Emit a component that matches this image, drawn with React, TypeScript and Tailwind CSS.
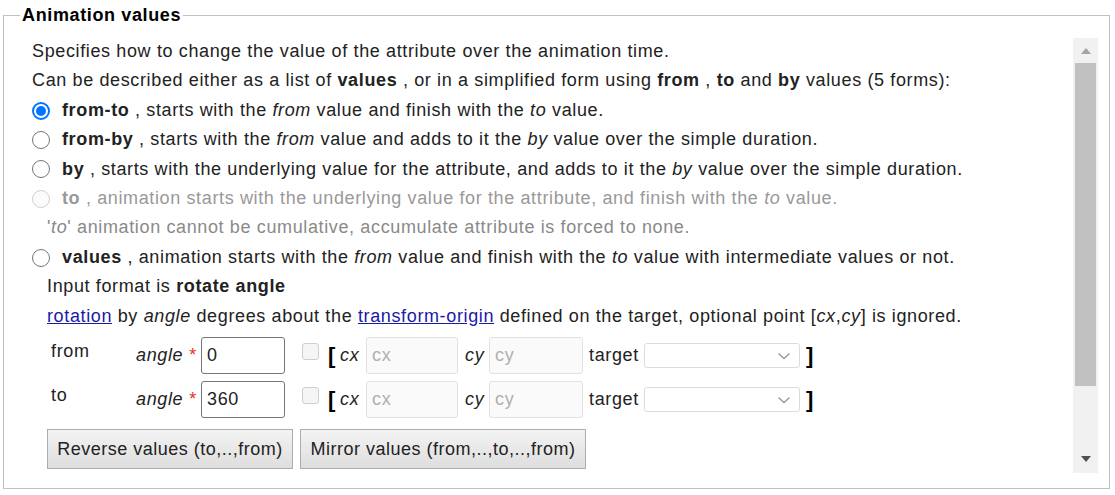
import React from "react";

function Radio({ state }: { state: "on" | "off" | "disabled" }) {
  if (state === "on") {
    return (
      <span className="w-[18px] h-[18px] rounded-full border-[2px] border-[#0075ff] flex items-center justify-center shrink-0">
        <span className="w-[10px] h-[10px] rounded-full bg-[#0075ff]" />
      </span>
    );
  }
  return (
    <span
      className={`w-[18px] h-[18px] rounded-full border shrink-0 ${
        state === "disabled" ? "border-[#cfcfcf] bg-[#fbfbfb]" : "border-[#767676] bg-white"
      }`}
    />
  );
}

function RadioLine({ state, children }: { state: "on" | "off" | "disabled"; children: React.ReactNode }) {
  return (
    <div className={`flex items-center ${state === "disabled" ? "text-[#999]" : ""}`}>
      <Radio state={state} />
      <span className="ml-[12px]">{children}</span>
    </div>
  );
}

function Chevron() {
  return (
    <svg width="14" height="8" viewBox="0 0 14 8" className="mr-[8px]">
      <path d="M1.5 1.5 L7 6.5 L12.5 1.5" fill="none" stroke="#9a9a9a" strokeWidth="1.4" />
    </svg>
  );
}

function ValueRow({ label, value }: { label: string; value: string }) {
  return (
    <div className="flex items-center h-[37px]">
      <span className="w-[89px] pl-[4px] self-start leading-[28px]">{label}</span>
      <span className="w-[65px] flex items-center justify-between pr-[4px]">
        <i>angle</i>
        <span className="text-[#e8302a]">*</span>
      </span>
      <input
        readOnly
        value={value}
        className="w-[84px] h-[37px] border border-[#767676] rounded-[3px] px-[5px] text-[18px] text-[#222] outline-none"
      />
      <span className="ml-[17px] w-[17px] h-[17px] rounded-[3px] border border-[#cfcfcf] bg-[#f5f5f5] -mt-[9px]" />
      <span className="w-[21px] pl-[9px] text-[22px] font-bold leading-[24px] text-black">[</span>
      <i className="w-[26px]">cx</i>
      <input
        disabled
        placeholder="cx"
        className="w-[92px] h-[37px] border border-[#e2e2e2] rounded-[3px] bg-[#fafafa] px-[5px] text-[18px] placeholder:text-[#b0b0b0]"
      />
      <i className="w-[31px] pl-[7px]">cy</i>
      <input
        disabled
        placeholder="cy"
        className="w-[94px] h-[37px] border border-[#e2e2e2] rounded-[3px] bg-[#fafafa] px-[5px] text-[18px] placeholder:text-[#b0b0b0]"
      />
      <span className="w-[61px] pl-[6px]">target</span>
      <span className="w-[156px] h-[25px] border border-[#dcdcdc] rounded-[3px] bg-white flex items-center justify-end">
        <Chevron />
      </span>
      <span className="ml-[6px] text-[22px] font-bold leading-[24px] text-black">]</span>
    </div>
  );
}

function Btn({ w, children }: { w: string; children: React.ReactNode }) {
  return (
    <button
      className={`${w} h-[40px] whitespace-nowrap text-center leading-[38px] tracking-[0.5px] border border-[#adadad] bg-linear-to-b from-[#f3f3f3] to-[#dedede] text-[18px] text-[#222]`}
    >
      {children}
    </button>
  );
}

export default function App() {
  return (
    <div className="w-[1115px] h-[495px] bg-white overflow-hidden font-['Liberation_Sans',Arial,sans-serif] text-[18px] tracking-[0.63px] text-[#222]">
      <fieldset className="ml-[3px] mt-[5px] w-[1107px] h-[484px] border border-[#c0c0c0] pt-[12px] pl-[4px] pr-[11px] flex">
        <legend className="ml-[12px] px-[2px] font-bold text-[18px] leading-[20px] text-black">Animation values</legend>
        <div className="flex w-full">
          <div className="flex-1 pl-[24px] leading-[29.4px]">
            <div>Specifies how to change the value of the attribute over the animation time.</div>
            <div>
              Can be described either as a list of <b>values</b> , or in a simplified form using <b>from</b> ,{" "}
              <b>to</b> and <b>by</b> values (5 forms):
            </div>
            <RadioLine state="on">
              <b>from-to</b> , starts with the <i>from</i> value and finish with the <i>to</i> value.
            </RadioLine>
            <RadioLine state="off">
              <b>from-by</b> , starts with the <i>from</i> value and adds to it the <i>by</i> value over the simple
              duration.
            </RadioLine>
            <RadioLine state="off">
              <b>by</b> , starts with the underlying value for the attribute, and adds to it the <i>by</i> value over
              the simple duration.
            </RadioLine>
            <RadioLine state="disabled">
              <b>to</b> , animation starts with the underlying value for the attribute, and finish with the <i>to</i>{" "}
              value.
            </RadioLine>
            <div className="pl-[15px] text-[#8a8a8a]">
              '<i>to</i>' animation cannot be cumulative, accumulate attribute is forced to none.
            </div>
            <RadioLine state="off">
              <b>values</b> , animation starts with the <i>from</i> value and finish with the <i>to</i> value with
              intermediate values or not.
            </RadioLine>
            <div className="pl-[15px]">
              <div>
                Input format is <b>rotate angle</b>
              </div>
              <div>
                <a className="text-[#1a1aa6] underline">rotation</a> by <i>angle</i> degrees about the{" "}
                <a className="text-[#1a1aa6] underline">transform-origin</a> defined on the target, optional point [
                <i>cx</i>,<i>cy</i>] is ignored.
              </div>
              <div className="mt-[6px] flex flex-col gap-[7px]">
                <ValueRow label="from" value="0" />
                <ValueRow label="to" value="360" />
              </div>
              <div className="mt-[11px] flex gap-[7px]">
                <Btn w="w-[246px]">Reverse values (to,..,from)</Btn>
                <Btn w="w-[286px]">Mirror values (from,..,to,..,from)</Btn>
              </div>
            </div>
          </div>
          <div className="w-[25px] h-[435px] mt-[1px] bg-[#f1f1f1] flex flex-col items-center shrink-0">
            <div className="h-[25px] flex items-center justify-center">
              <svg width="10" height="6" viewBox="0 0 10 6">
                <path d="M0 6 L5 0 L10 6 Z" fill="#a3a3a3" />
              </svg>
            </div>
            <div className="w-[21px] h-[323px] bg-[#c1c1c1]" />
            <div className="flex-1" />
            <div className="h-[28px] flex items-center justify-center">
              <svg width="10" height="6" viewBox="0 0 10 6">
                <path d="M0 0 L10 0 L5 6 Z" fill="#505050" />
              </svg>
            </div>
          </div>
        </div>
      </fieldset>
    </div>
  );
}
